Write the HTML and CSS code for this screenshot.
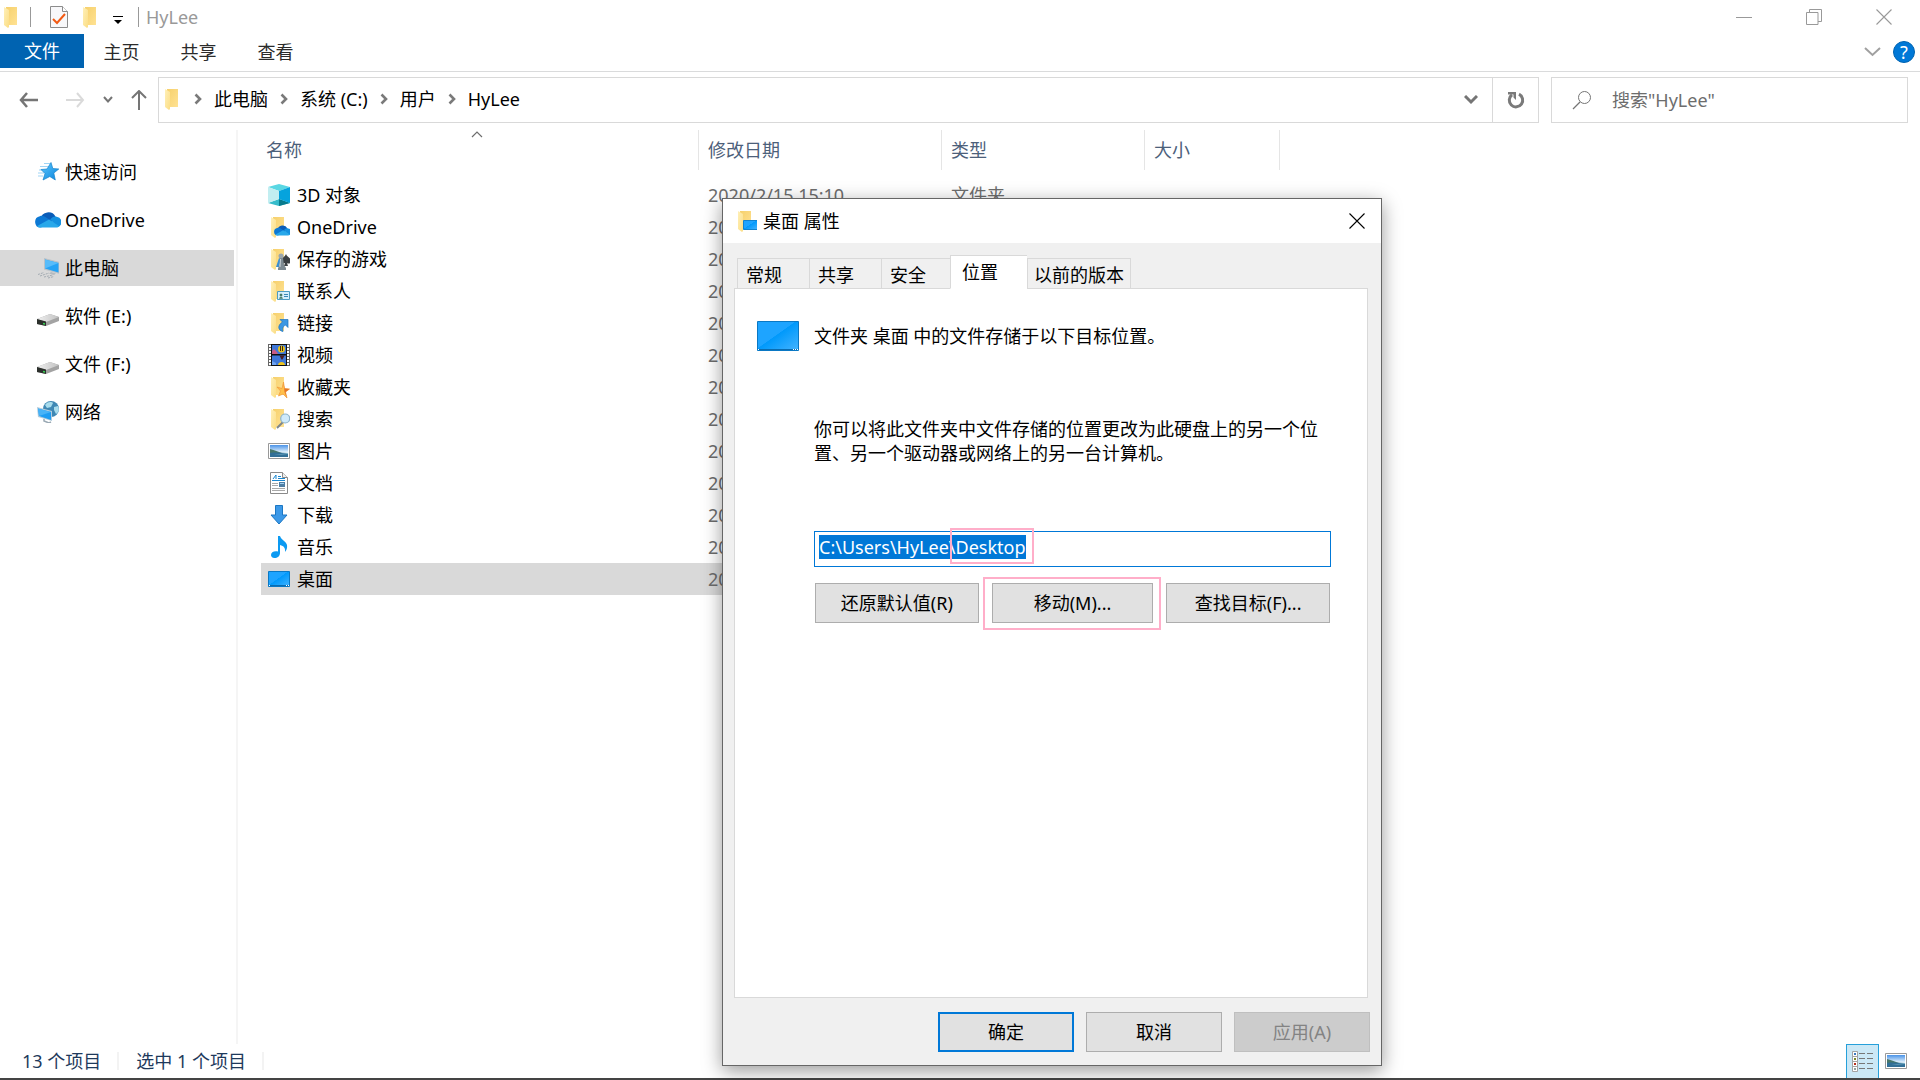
FILE: index.html
```html
<!DOCTYPE html>
<html lang="zh-CN">
<head>
    <meta charset="UTF-8">
    <meta name="viewport" content="width=device-width, initial-scale=1.0">
    <title>HyLee</title>
    <link rel="stylesheet" href="styles.css">
</head>
<body>

<!-- icon sprites -->
<svg class="sprites" aria-hidden="true">
    <defs>
        <linearGradient id="g-folder" x1="0" y1="0" x2="1" y2="1"><stop offset="0" stop-color="#f6d06c"/><stop offset="1" stop-color="#ffe293"/></linearGradient>
        <linearGradient id="g-flap" x1="0" y1="0" x2="1" y2="1"><stop offset="0" stop-color="#fff0b8"/><stop offset="1" stop-color="#fbdd85"/></linearGradient>
        <linearGradient id="g-sky" x1="0" y1="0" x2="0" y2="1"><stop offset="0" stop-color="#4a93e8"/><stop offset=".6" stop-color="#e2f1fb"/></linearGradient>
        <linearGradient id="g-desk" x1="0" y1="0" x2="1" y2="1"><stop offset="0" stop-color="#1ea4ff"/><stop offset=".46" stop-color="#1ea4ff"/><stop offset=".47" stop-color="#0099fb"/><stop offset="1" stop-color="#45b4ff"/></linearGradient>
        <linearGradient id="g-star" x1="0" y1="0" x2="1" y2="1"><stop offset="0" stop-color="#5cc8ff"/><stop offset="1" stop-color="#0a84dc"/></linearGradient>
        <linearGradient id="g-drive" x1="0" y1="0" x2="1" y2="0"><stop offset="0" stop-color="#f0f0f0"/><stop offset="1" stop-color="#c2c2c2"/></linearGradient>
    </defs>
    <symbol id="folder" viewBox="0 0 22 22">
        <path d="M5 1h11v18H5z" fill="url(#g-folder)"/>
        <path d="M3 1l5 3v17l-1 1-4-3z" fill="url(#g-flap)"/>
    </symbol>
    <symbol id="cloud" viewBox="0 2 24 16">
        <path d="M5 9a7.500 7.500 0 0 1 14-2l-5 7z" fill="#0a5cb8"/>
        <path d="M4.500 6.500c2-.8 4 0 5.500 1l9 6-14 3.500A5.300 5.300 0 0 1 4.500 6.500z" fill="#0c78d4"/>
        <path d="M14 9.500c2-2.500 4-3.300 6-2.500a5 5 0 0 1 1 9.700z" fill="#1490df"/>
        <path d="M2 15.500l11-6 9.500 6.300c-.8.900-2 1.200-3 1.200H5c-1.200 0-2.300-.6-3-1.500z" fill="#28a8ea"/>
    </symbol>
    <symbol id="star" viewBox="0 0 22 22">
        <path d="M7 2.500h6M3 5.500h8M1 12h6M2 9h5M1 15h5" stroke="#9fd4f5" stroke-width="1"/>
        <path d="M14 1.500l1.800 6 6 .5-5 4 1.500 7-5.500-3.500L6 19l2-6.500L4 8.500l6-.5z" fill="url(#g-star)" stroke="#1583cc" stroke-width=".7"/>
    </symbol>
    <symbol id="pc" viewBox="0 0 22 22">
        <path d="M7 1l15.500 4v12L7 12.500z" fill="#b9c1c8"/>
        <path d="M8 2.500L21.500 6v9.500L8 11.500z" fill="#25a3f5"/>
        <path d="M8 2.500L21.500 6 8 11.500z" fill="#57bcfa"/>
        <path d="M14 15l5 1.500-2 1.500-5-1.500z" fill="#b4babf"/>
        <path d="M1 17.500l6-2M3 19l9-3M7 20l9-2M11 21l6-1.500" fill="none" stroke="#a3abb2" stroke-dasharray="2 1"/>
    </symbol>
    <symbol id="drive" viewBox="0 0 22 22">
        <path d="M0 14l13-5 9 3v4L9 21l-9-2z" fill="#a3a3a3"/>
        <path d="M0 14l13-5 9 3-13 5z" fill="url(#g-drive)"/>
        <path d="M0 14l9 2.500V21l-9-2z" fill="#2c302c"/>
        <path d="M6 18.500l2 .5" stroke="#39d353" stroke-width="1.500"/>
    </symbol>
    <symbol id="network" viewBox="0 0 22 22">
        <circle cx="14" cy="8" r="8" fill="#3f88b4"/>
        <path d="M8 4c3-4 7-3 8-2l-2 4-4 1zM17 6l4-1c2 4 0 7-2 8l-2-4z" fill="#a9dcec"/>
        <path d="M0 6l15 4v10L1 16z" fill="#b3ccdc"/>
        <path d="M1 7.500L14 11v8L2 15z" fill="#1f9df2"/>
        <path d="M1 7.500L14 11 2 15z" fill="#48b3f7"/>
        <path d="M7 18v2l5 2 2-1" stroke="#9aa9b4" stroke-width="1.500" fill="none"/>
    </symbol>
    <symbol id="cube" viewBox="0 0 22 22">
        <path d="M11 0l11 3-11 4L0 3z" fill="#5ad7e3"/>
        <path d="M11 15l11 4-11 3-11-3z" fill="#36bccb"/>
        <path d="M11 15l11 4-11 3z" fill="#087a8c"/>
        <path d="M0 3l11 4v8L0 19z" fill="#c2eef1"/>
        <path d="M22 3L11 7v8l11 4z" fill="#06a3dd"/>
    </symbol>
    <symbol id="f-cloud" viewBox="0 0 22 22">
        <use href="#folder" width="22" height="22"/>
        <use href="#cloud" x="6" y="8" width="17" height="13"/>
    </symbol>
    <symbol id="f-games" viewBox="0 0 22 22">
        <use href="#folder" width="22" height="22"/>
        <path d="M8 19l3-9 2 1-2 8z" fill="#3d8fd1"/>
        <path d="M18 6c1 3 5 4 5 7 0 3-3 3-4 2l1 3h-4l1-3c-2 1-4 0-4-2 0-3 4-4 5-7z" fill="#3c4043"/>
        <circle cx="13" cy="8" r="2.500" fill="#9aa5ac"/>
        <path d="M12 10h3l1 7 2 3v2h-8v-2l2-3z" fill="#7d8a92"/>
        <path d="M12.500 11l-.5 8" stroke="#c9d1d6"/>
    </symbol>
    <symbol id="f-contact" viewBox="0 0 22 22">
        <use href="#folder" width="22" height="22"/>
        <path d="M9.500 11.500h12v8h-12z" fill="#d5effb" stroke="#4f9cc0"/>
        <path d="M11.500 18.500c0-2 3-2 3 0zM12 14h2v2h-2z" fill="#457b65" stroke="#457b65" stroke-width=".5"/>
        <path d="M16 14.500h4M16 16.500h4" stroke="#3c88b4"/>
    </symbol>
    <symbol id="f-link" viewBox="0 0 22 22">
        <use href="#folder" width="22" height="22"/>
        <path d="M12 7.500h8v8l-2.500-2.500c-3 1.500-3 4-2.500 6.500-5-1-6-6-.5-9.500z" fill="#3b97e3" stroke="#1b72bd" stroke-width=".7"/>
    </symbol>
    <symbol id="video" viewBox="0 0 22 22">
        <path d="M0 0h22v22H0z" fill="#666"/>
        <path d="M2 1v21M20 1v21" stroke="#fff" stroke-width="2" stroke-dasharray="2 1"/>
        <path d="M4 1h14v20H4z" fill="#3f78d8"/>
        <path d="M4 7l2-2 3 3 1 2.500H4z" fill="#c85c86"/>
        <circle cx="13.500" cy="5" r="3.500" fill="#e8c21b"/>
        <path d="M12 2h1v5h-1zM14 2h1v5h-1z" fill="#3b2a1b"/>
        <path d="M4 10h14v1.500H4z" fill="#111"/>
        <path d="M11.500 11.500h5l-2 4h-1z" fill="#4b1d22"/>
        <path d="M10 21c0-4 7-4 7 0z" fill="#f0c51d"/>
        <path d="M4 17l4 2v2H4z" fill="#6ea3f0"/>
        <path d="M3.500 0v22M18.500 0v22M4 .5h14M4 21.500h14" stroke="#111"/>
    </symbol>
    <symbol id="f-star" viewBox="0 0 22 22">
        <use href="#folder" width="22" height="22"/>
        <path d="M15.500 6l1 6.500 5 .5-4 3 1.500 6-4-4-4.500 2 2-5L9 11l5 1.500z" fill="#ffc04a" stroke="#f09a3c" stroke-width=".7"/>
        <path d="M15.500 6l1 6.500 5 .5-4 3 1.500 6-2.500-6z" fill="#e5762b"/>
    </symbol>
    <symbol id="f-search" viewBox="0 0 22 22">
        <use href="#folder" width="22" height="22"/>
        <path d="M9 20l6-6" stroke="#7d868c" stroke-width="2"/>
        <circle cx="17.200" cy="10.500" r="4.500" fill="#cfeafb" stroke="#8cb3cb" stroke-width="1.200"/>
    </symbol>
    <symbol id="picture" viewBox="0 0 22 16">
        <path d="M.5.500h21v15H.5z" fill="#fff" stroke="#999"/>
        <path d="M2 2h18v12H2z" fill="url(#g-sky)"/>
        <path d="M2 6c5 1 8 3 12 4H2z" fill="#47766a"/>
        <path d="M2 10c6-1 12 0 18 0v4H2z" fill="#316f97"/>
        <path d="M6 12l14-2v1z" fill="#83b8cc"/>
    </symbol>
    <symbol id="document" viewBox="0 0 18 22">
        <path d="M.5.500h12l5 5v16H.5z" fill="#fff" stroke="#8a8a8a"/>
        <path d="M12.500.500v5h5" fill="#eee" stroke="#8a8a8a"/>
        <path d="M3 7l3-4v4M8 4.500h3M8 6.500h7M2 8.500h13" stroke="#1a87d0" fill="none"/>
        <path d="M2 11.500h6M2 13.500h6M2 16.500h13M2 18.500h13" stroke="#a9a9a9"/>
        <path d="M9 10h6v5H9z" fill="#4f7ea3"/>
        <path d="M10 11h4v1h-4z" fill="#a2d0f0"/>
    </symbol>
    <symbol id="download" viewBox="0 0 18 20">
        <path d="M5.500.5h7V10H17l-8 9-8-9h4.500z" fill="#3c99e8" stroke="#1c77c3"/>
    </symbol>
    <symbol id="music" viewBox="0 0 16 22">
        <path d="M7 0h2c1 4 6 5 7 9 .5 3-.5 5-2 7 .5-4-1-6-5-7v8c0 3-2.500 5-5.500 5C1 22 0 20.500 0 19c0-2.500 3-4.500 7-3.500z" fill="#0c9af2"/>
    </symbol>
    <symbol id="desktop" viewBox="0 0 22 16">
        <path d="M.5.500h21v15H.5z" fill="url(#g-desk)" stroke="#0a78c4"/>
        <path d="M1 14.500h20" stroke="#0a6cb0"/>
        <path d="M1 14.500h1M18 14.500h1M20 14.500h1" stroke="#fff"/>
    </symbol>
    <symbol id="f-desktop" viewBox="0 0 22 22">
        <use href="#folder" width="22" height="22"/>
        <path d="M8.500 10.500h14v9h-14z" fill="url(#g-desk)" stroke="#1182cf"/>
    </symbol>
    <symbol id="crumb" viewBox="0 0 8 12"><path d="M1.500 1.500L6 6l-4.500 4.500" fill="none" stroke="#7a7a7a" stroke-width="2.600"/></symbol>
    <symbol id="cross" viewBox="0 0 16 16"><path d="M.5.500l15 15M15.500.500l-15 15" fill="none" stroke="currentColor" stroke-width="1.100"/></symbol>
</svg>

<header>
    <div class="title-bar">
        <svg class="icon"><use href="#folder"/></svg>
        <span class="bar"></span>
        <button class="quick" aria-label="属性">
            <svg width="18" height="22" viewBox="0 0 18 22">
                <path d="M.5.500h12l5 5v16H.5z" fill="#f8f8fa" stroke="#8c8c8c"/>
                <path d="M12.500.500v5h5" fill="#fff" stroke="#8c8c8c"/>
                <path d="M3 13l4 4 8-9" fill="none" stroke="#f25a13" stroke-width="2"/>
            </svg>
        </button>
        <button class="quick" aria-label="新建文件夹"><svg class="icon"><use href="#folder"/></svg></button>
        <button class="quick menu" aria-label="自定义快速访问工具栏">
            <svg width="10" height="10" viewBox="0 0 10 10"><path d="M0 1.500h10" stroke="#000"/><path d="M1 5h8L5 9z"/></svg>
        </button>
        <span class="bar"></span>
        <h1>HyLee</h1>
        <div class="window-buttons">
            <button aria-label="最小化"><svg width="16" height="16"><path d="M0 8.500h16" stroke="currentColor"/></svg></button>
            <button aria-label="还原"><svg width="16" height="16" fill="none" stroke="currentColor"><path d="M.5 3.500h11.500v12H.5zM3.500 3.500v-3h12v12h-3.500"/></svg></button>
            <button aria-label="关闭"><svg width="16" height="16"><use href="#cross"/></svg></button>
        </div>
    </div>

    <div class="ribbon">
        <button class="active">文件</button>
        <button>主页</button>
        <button>共享</button>
        <button>查看</button>
        <div class="ribbon-end">
            <button aria-label="展开功能区"><svg width="17" height="10" viewBox="0 0 17 10"><path d="M1 1l7.500 7L16 1" fill="none" stroke="#a0a0a0" stroke-width="2"/></svg></button>
            <button class="help" aria-label="帮助">?</button>
        </div>
    </div>

    <div class="address-row">
        <div class="nav-buttons">
            <button aria-label="后退"><svg width="20" height="16" viewBox="0 0 20 16"><path d="M8 1L2 8l6 7M2 8h17" fill="none" stroke="#757575" stroke-width="2.500"/></svg></button>
            <button aria-label="前进"><svg width="20" height="16" viewBox="0 0 20 16"><path d="M12 1l6 7-6 7M18 8H1" fill="none" stroke="#dadada" stroke-width="2"/></svg></button>
            <button aria-label="最近"><svg width="10" height="8" viewBox="0 0 10 8"><path d="M1 1l4 4.500L9 1" fill="none" stroke="#757575" stroke-width="2"/></svg></button>
            <button aria-label="上移"><svg width="16" height="20" viewBox="0 0 16 20"><path d="M1 8l7-7 7 7M8 1v19" fill="none" stroke="#757575" stroke-width="2"/></svg></button>
        </div>
        <div class="address">
            <nav class="crumbs">
                <svg class="icon"><use href="#folder"/></svg>
                <svg class="sep"><use href="#crumb"/></svg>
                <a href="#">此电脑</a>
                <svg class="sep"><use href="#crumb"/></svg>
                <a href="#">系统 (C:)</a>
                <svg class="sep"><use href="#crumb"/></svg>
                <a href="#">用户</a>
                <svg class="sep"><use href="#crumb"/></svg>
                <a href="#">HyLee</a>
            </nav>
            <button class="history" aria-label="以前的位置"><svg width="14" height="10" viewBox="0 0 14 10"><path d="M1 1l6 6 6-6" fill="none" stroke="#757575" stroke-width="3"/></svg></button>
            <button class="refresh" aria-label="刷新"><svg width="18" height="18" viewBox="0 0 18 18"><path d="M12 3.200a6.700 6.700 0 1 1-7 .6" fill="none" stroke="#7a7a7a" stroke-width="3"/><path d="M1 1h8v8l-2.500-2.500V3.500H1z" fill="#7a7a7a"/></svg></button>
        </div>
        <label class="search">
            <svg width="20" height="20" viewBox="0 0 20 20"><circle cx="12.500" cy="7.500" r="6" fill="none" stroke="#757575"/><path d="M8 12l-7 7" stroke="#757575" stroke-width="1.300"/></svg>
            <input type="search" placeholder='搜索"HyLee"' aria-label="搜索">
        </label>
    </div>
</header>

<main>
    <nav class="sidebar">
        <a href="#"><svg class="icon"><use href="#star"/></svg>快速访问</a>
        <a href="#"><svg class="icon wide"><use href="#cloud"/></svg>OneDrive</a>
        <a href="#" class="current"><svg class="icon"><use href="#pc"/></svg>此电脑</a>
        <a href="#"><svg class="icon"><use href="#drive"/></svg>软件 (E:)</a>
        <a href="#"><svg class="icon"><use href="#drive"/></svg>文件 (F:)</a>
        <a href="#"><svg class="icon"><use href="#network"/></svg>网络</a>
    </nav>

    <table class="files">
        <thead>
            <tr>
                <th class="col-name">名称<svg class="sort" width="12" height="7" viewBox="0 0 12 7"><path d="M1 6l5-5 5 5" fill="none" stroke="#6d6d6d" stroke-width="1.200"/></svg></th>
                <th class="col-date">修改日期</th>
                <th class="col-type">类型</th>
                <th class="col-size">大小</th>
            </tr>
        </thead>
        <tbody>
            <tr><td><svg class="icon"><use href="#cube"/></svg>3D 对象</td><td>2020/2/15 15:10</td><td>文件夹</td><td></td></tr>
            <tr><td><svg class="icon"><use href="#f-cloud"/></svg>OneDrive</td><td>2020/2/15 15:10</td><td>文件夹</td><td></td></tr>
            <tr><td><svg class="icon"><use href="#f-games"/></svg>保存的游戏</td><td>2020/2/15 15:10</td><td>文件夹</td><td></td></tr>
            <tr><td><svg class="icon"><use href="#f-contact"/></svg>联系人</td><td>2020/2/15 15:10</td><td>文件夹</td><td></td></tr>
            <tr><td><svg class="icon"><use href="#f-link"/></svg>链接</td><td>2020/2/15 15:10</td><td>文件夹</td><td></td></tr>
            <tr><td><svg class="icon"><use href="#video"/></svg>视频</td><td>2020/2/15 15:10</td><td>文件夹</td><td></td></tr>
            <tr><td><svg class="icon"><use href="#f-star"/></svg>收藏夹</td><td>2020/2/15 15:10</td><td>文件夹</td><td></td></tr>
            <tr><td><svg class="icon"><use href="#f-search"/></svg>搜索</td><td>2020/2/15 15:10</td><td>文件夹</td><td></td></tr>
            <tr><td><svg class="icon"><use href="#picture"/></svg>图片</td><td>2020/2/15 15:10</td><td>文件夹</td><td></td></tr>
            <tr><td><svg class="icon"><use href="#document"/></svg>文档</td><td>2020/2/15 15:10</td><td>文件夹</td><td></td></tr>
            <tr><td><svg class="icon small"><use href="#download"/></svg>下载</td><td>2020/2/15 15:10</td><td>文件夹</td><td></td></tr>
            <tr><td><svg class="icon"><use href="#music"/></svg>音乐</td><td>2020/2/15 15:10</td><td>文件夹</td><td></td></tr>
            <tr class="selected"><td><svg class="icon"><use href="#desktop"/></svg>桌面</td><td>2020/2/15 15:10</td><td>文件夹</td><td></td></tr>
        </tbody>
    </table>
</main>

<footer>
    <span class="status">13 个项目</span>
    <span class="status">选中 1 个项目</span>
    <div class="views">
        <button class="on" aria-label="详细信息">
            <svg width="22" height="22" viewBox="0 0 22 22">
                <path d="M.5.500h5v5h-5zM.5 5.500h5v5h-5zM.5 10.500h5v5h-5zM.5 15.500h5v5h-5z" fill="#fff" stroke="#a3a3a3"/>
                <path d="M2 2h2v2H2z" fill="#3a7ac0"/><path d="M2 7h2v2H2z" fill="#7e8a2c"/><path d="M2 12h2v2H2z" fill="#b6301e"/><path d="M2 17h2v2H2z" fill="#8fa3a0"/>
                <path d="M7 2.500h6M15 2.500h6M7 7.500h6M15 7.500h6M7 12.500h6M15 12.500h6M7 17.500h6M15 17.500h6" stroke="#777"/>
            </svg>
        </button>
        <button aria-label="大图标"><svg width="22" height="16"><use href="#picture"/></svg></button>
    </div>
</footer>

<section class="dialog" role="dialog" aria-labelledby="dialog-title">
    <div class="dialog-title">
        <svg class="icon"><use href="#f-desktop"/></svg>
        <h2 id="dialog-title">桌面 属性</h2>
        <button aria-label="关闭"><svg width="16" height="16"><use href="#cross"/></svg></button>
    </div>
    <div class="dialog-body">
        <div class="tabs" role="tablist">
            <button role="tab">常规</button>
            <button role="tab">共享</button>
            <button role="tab">安全</button>
            <button role="tab" class="active" aria-selected="true">位置</button>
            <button role="tab">以前的版本</button>
        </div>
        <div class="panel">
            <div class="intro">
                <svg width="42" height="30" viewBox="0 0 42 30">
                    <path d="M.5.500h41v29H.5z" fill="url(#g-desk)" stroke="#0a78c4"/>
                    <path d="M1 28.500h40" stroke="#0a6cb0"/>
                    <path d="M1 28.500h1M36 28.500h1M38 28.500h1M40 28.500h1" stroke="#fff"/>
                </svg>
                <p>文件夹 桌面 中的文件存储于以下目标位置。</p>
            </div>
            <div class="fields">
                <p>你可以将此文件夹中文件存储的位置更改为此硬盘上的另一个位置、另一个驱动器或网络上的另一台计算机。</p>
                <div class="path">
                    <input type="text" id="path" value="C:\Users\HyLee\Desktop" aria-label="目标位置" spellcheck="false">
                    <span class="mark mark-path"></span>
                </div>
                <div class="actions">
                    <button>还原默认值(R)</button>
                    <div class="move"><button>移动(M)...</button><span class="mark mark-move"></span></div>
                    <button>查找目标(F)...</button>
                </div>
            </div>
        </div>
        <div class="dialog-buttons">
            <button class="default">确定</button>
            <button>取消</button>
            <button disabled>应用(A)</button>
        </div>
    </div>
</section>

<script>
    const pathInput = document.getElementById('path');
    pathInput.focus();
    pathInput.select();
</script>

</body>
</html>
```

FILE: styles.css
```css
* {
    box-sizing: border-box;
}
body {
    margin: 0;
    height: 100vh;
    display: flex;
    flex-direction: column;
    background-color: white;
    color: black;
    font-family: "Noto Sans", "Noto Sans CJK SC", sans-serif;
    font-size: 18px;
    font-weight: 380;
    line-height: 24px;
    overflow: hidden;
    border-bottom: 2px solid #444;
}
h1, h2, p {
    margin: 0;
    font-size: 18px;
    font-weight: inherit;
}
a {
    color: inherit;
    text-decoration: none;
}
button, input {
    font: inherit;
    color: inherit;
    background: none;
    border: 0;
    border-radius: 0;
    padding: 0;
}
svg {
    display: block;
    flex: none;
}
.sprites {
    position: absolute;
    width: 0;
    height: 0;
}
.icon {
    width: 22px;
    height: 22px;
}

/* Title bar */
.title-bar {
    display: flex;
    align-items: center;
    height: 34px;
    color: #999;
}
.title-bar > .icon {
    margin: 0 7px 0 1px;
}
.bar {
    width: 1px;
    height: 20px;
    background-color: #999;
}
.quick {
    margin-left: 12px;
}
.bar + .quick {
    margin-left: 19px;
}
.quick.menu {
    margin-left: 11px;
    padding-top: 5px;
}
.quick + .bar {
    margin: 0 7px 0 15px;
}
.window-buttons {
    display: flex;
    gap: 54px;
    margin-left: auto;
    padding-right: 28px;
}

/* Ribbon tabs */
.ribbon {
    display: flex;
    align-items: stretch;
    height: 38px;
    padding-bottom: 3px;
    border-bottom: 1px solid #dadbdc;
    color: #2b2b2b;
}
.ribbon > button {
    width: 77px;
    padding: 2px 2px 0 0;
}
.ribbon > .active {
    width: 84px;
    padding: 0;
    background-color: #0063b1;
    color: white;
}
.ribbon-end {
    display: flex;
    align-items: center;
    gap: 12px;
    margin-left: auto;
    padding: 1px 5px 0 0;
}
.help {
    width: 22px;
    height: 22px;
    border: 1px solid #0063b1;
    border-radius: 50%;
    background-color: #0078d7;
    color: white;
    line-height: 20px;
}

/* Address bar */
.address-row {
    display: flex;
    gap: 12px;
    height: 56px;
    padding: 5px 12px 5px 19px;
}
.nav-buttons {
    display: flex;
    align-items: center;
    width: 127px;
    gap: 18px;
}
.nav-buttons button:first-child {
    margin-right: 8px;
}
.address {
    flex: 1;
    display: flex;
    border: 1px solid #d9d9d9;
}
.crumbs {
    flex: 1;
    display: flex;
    align-items: center;
    gap: 12px;
    padding-bottom: 2px;
}
.crumbs .icon {
    margin: 0 -2px 0 3px;
}
.sep {
    width: 8px;
    height: 12px;
}
.history {
    width: 42px;
}
.refresh {
    width: 46px;
    border-left: 1px solid #d9d9d9;
}
.address button svg,
.ribbon-end svg {
    margin: 0 auto;
}
.search {
    display: flex;
    align-items: center;
    gap: 20px;
    width: 357px;
    padding-left: 20px;
    border: 1px solid #d9d9d9;
}
.search input {
    flex: 1;
    min-width: 0;
    outline: none;
}
.search input::placeholder {
    color: #6d6d6d;
}

/* Sidebar and file list */
main {
    flex: 1;
    display: flex;
    gap: 23px;
    padding-top: 2px;
}
.sidebar {
    display: flex;
    flex-direction: column;
    gap: 12px;
    width: 238px;
    padding: 24px 2px 0 0;
    border-right: 2px solid #f5f5f5;
}
.sidebar a {
    display: flex;
    align-items: center;
    gap: 6px;
    height: 36px;
    padding-left: 37px;
}
.sidebar .wide {
    width: 26px;
    margin: 0 -2px;
}
.sidebar .current {
    background-color: #d9d9d9;
}
.files {
    align-self: flex-start;
    width: 1019px;
    table-layout: fixed;
    border-collapse: separate;
    border-spacing: 0;
    color: #6d6d6d;
}
.files thead::after {
    content: "";
    display: block;
    height: 9px;
}
.files th {
    position: relative;
    height: 40px;
    padding: 0 9px;
    border-right: 1px solid #e5e5e5;
    color: #4c607a;
    font-weight: inherit;
    text-align: left;
}
.files .col-name {
    width: 438px;
    padding-left: 5px;
}
.files .col-date {
    width: 243px;
}
.files .col-type {
    width: 203px;
}
/* sort arrow sits above the header text */
.sort {
    position: absolute;
    top: 1px;
    left: 48%;
}
.files td {
    height: 32px;
    padding: 0 9px;
}
.files td:first-child {
    display: flex;
    align-items: center;
    gap: 7px;
    padding-left: 7px;
    color: black;
}
.files .small {
    height: 20px;
}
.files .selected {
    background-color: #d9d9d9;
}

/* Status bar */
footer {
    display: flex;
    align-items: center;
    height: 34px;
    padding-right: 13px;
    color: #1e395b;
}
.status {
    padding: 0 16px 0 17px;
    line-height: 18px;
    border-right: 2px solid #f3f3f3;
}
.status:first-child {
    padding-left: 22px;
}
.views {
    display: flex;
    align-items: center;
    gap: 6px;
    margin-left: auto;
}
.views .on {
    height: 34px;
    padding: 0 4px 0 5px;
    border: 1px solid #26a0da;
    border-bottom: 0;
    background-color: #cbe8f6;
}

/* Properties dialog */
.dialog {
    position: absolute;
    top: 198px;
    left: 722px;
    width: 660px;
    border: 1px solid #666;
    background-color: #f0f0f0;
    box-shadow: 0 5px 18px rgba(0, 0, 0, 0.4);
}
.dialog-title {
    display: flex;
    align-items: center;
    gap: 6px;
    height: 44px;
    padding: 0 16px 0 12px;
    background-color: white;
}
.dialog-title button {
    margin-left: auto;
}
.dialog-body {
    padding: 12px 13px 13px 11px;
}
.tabs {
    display: flex;
    align-items: flex-end;
    padding-left: 3px;
    margin-bottom: -1px;
}
.tabs button {
    width: 72px;
    height: 31px;
    padding: 3px 0 0 8px;
    border: 1px solid #d9d9d9;
    border-right: 0;
    text-align: left;
}
.tabs .active {
    position: relative;
    width: 77px;
    height: 34px;
    margin-left: -3px;
    padding: 0 0 0 11px;
    border-bottom-color: white;
    background-color: white;
}
.tabs button:last-child {
    width: 104px;
    padding-left: 6px;
    border-right: 1px solid #d9d9d9;
}
.panel {
    height: 710px;
    padding: 32px 36px 0 22px;
    border: 1px solid #d9d9d9;
    background-color: white;
}
.intro {
    display: flex;
    align-items: center;
    gap: 15px;
}
.fields {
    padding: 66px 0 0 57px;
}
.path {
    position: relative;
    margin: 66px 0 16px;
}
.path input {
    display: block;
    width: 100%;
    height: 36px;
    padding: 0 4px 4px;
    border: 1px solid #0078d7;
    outline: none;
}
.path input::selection {
    background-color: #0078d7;
    color: white;
}
.actions {
    display: flex;
    gap: 13px;
    padding: 0 1px;
}
.actions > * {
    flex: 1;
    position: relative;
}
.actions button,
.dialog-buttons button {
    height: 40px;
    border: 1px solid #adadad;
    background-color: #e1e1e1;
}
.move button {
    width: 100%;
}
/* pink frames around the things to change */
.mark {
    position: absolute;
    border: 2px solid #ffaec9;
    pointer-events: none;
}
.mark-path {
    top: -3px;
    left: 136px;
    width: 84px;
    height: 36px;
}
.mark-move {
    top: -6px;
    left: -9px;
    right: -8px;
    height: 53px;
}
.dialog-buttons {
    display: flex;
    justify-content: flex-end;
    gap: 12px;
    margin: 14px -2px 0 0;
}
.dialog-buttons button {
    width: 136px;
}
.dialog-buttons .default {
    border: 2px solid #0078d7;
}
.dialog-buttons button:disabled {
    border-color: #bfbfbf;
    background-color: #ccc;
    color: #838383;
}
```
